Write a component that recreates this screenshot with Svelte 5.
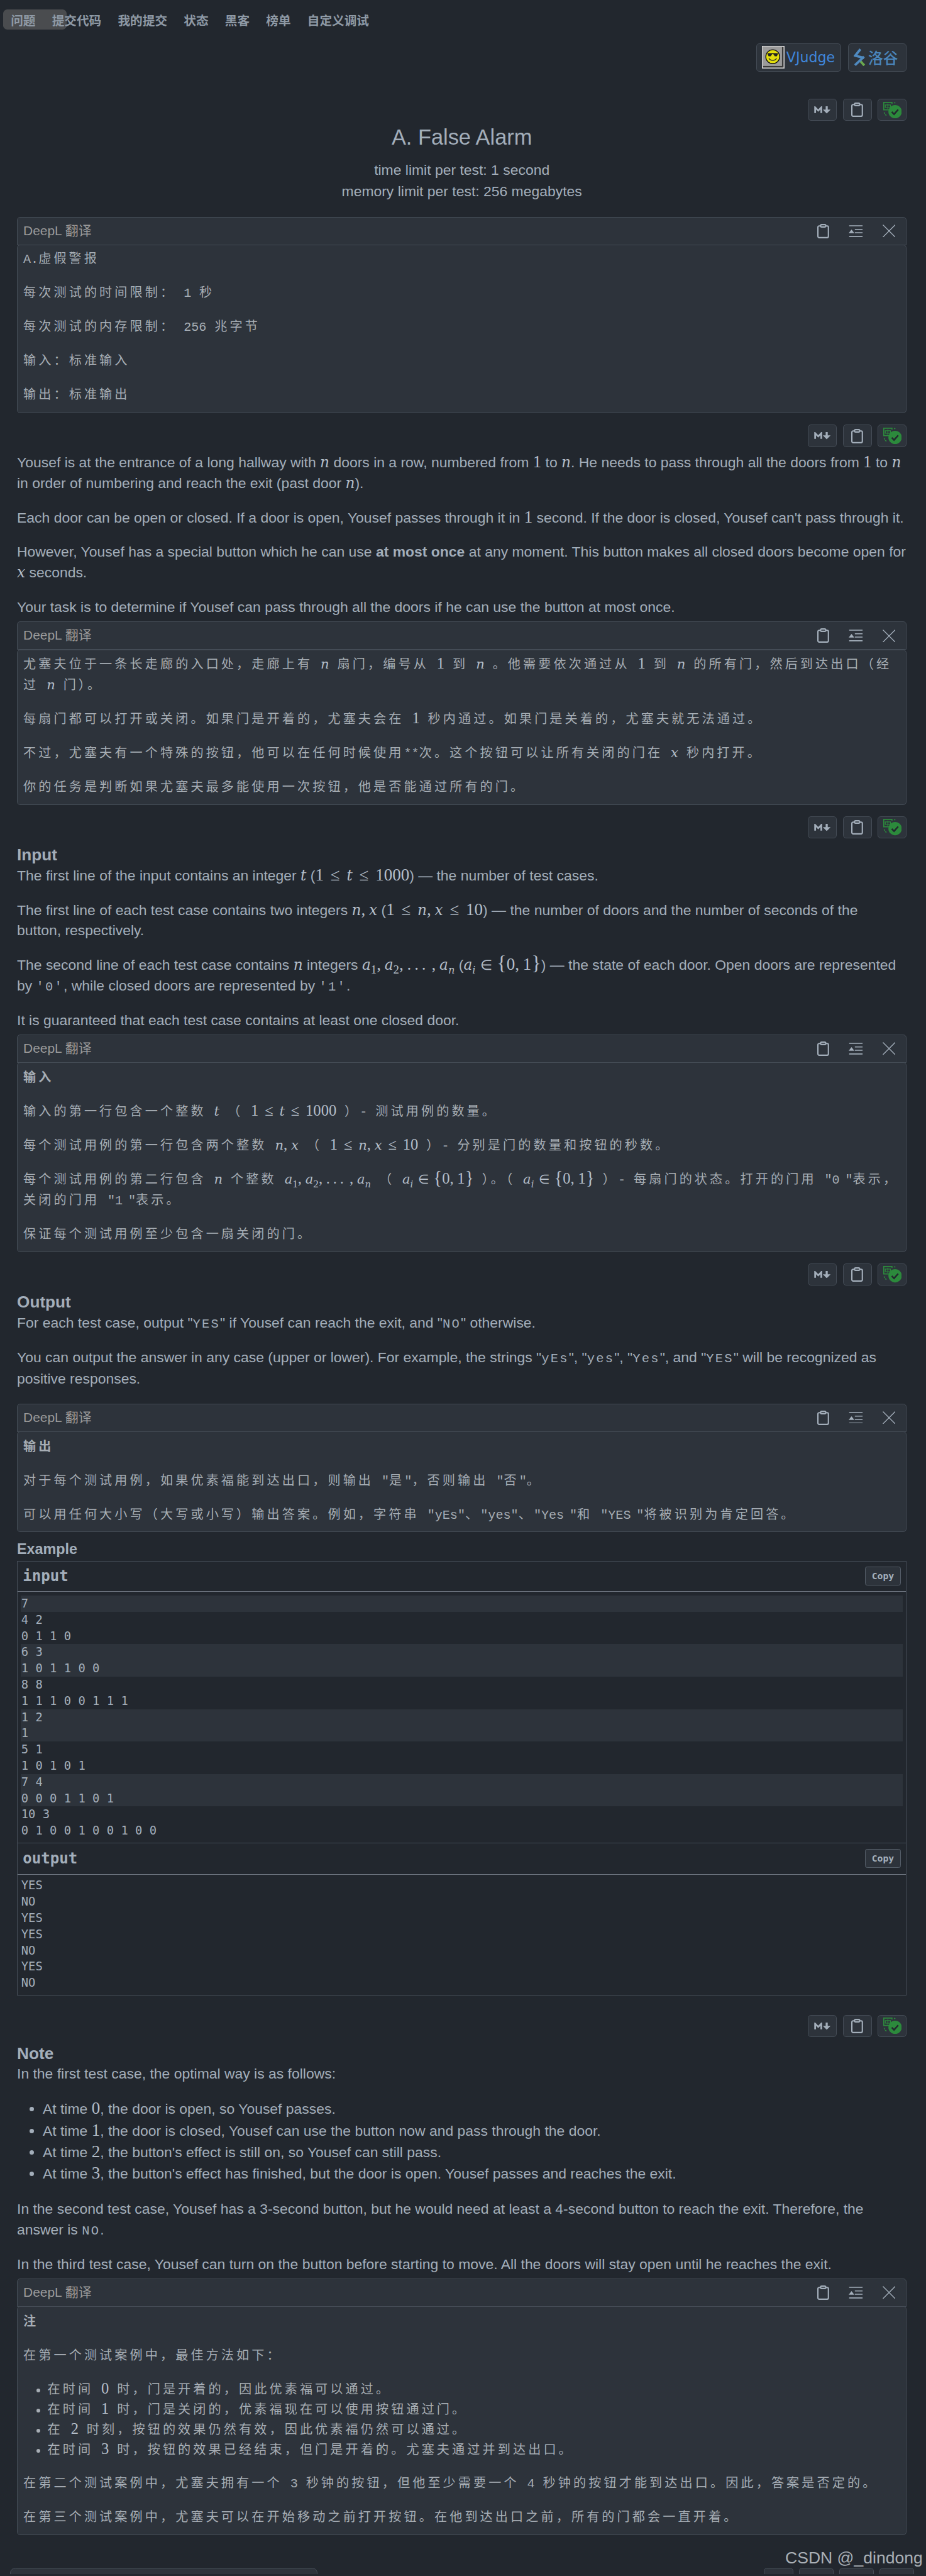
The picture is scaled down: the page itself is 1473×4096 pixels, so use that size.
<script>
  const tabs = ['问题', '提交代码', '我的提交', '状态', '黑客', '榜单', '自定义调试'];

  const inputRows = ['7', '4 2', '0 1 1 0', '6 3', '1 0 1 1 0 0', '8 8', '1 1 1 0 0 1 1 1', '1 2', '1', '5 1', '1 0 1 0 1', '7 4', '0 0 0 1 1 0 1', '10 3', '0 1 0 0 1 0 0 1 0 0'];
  const outputRows = ['YES', 'NO', 'YES', 'YES', 'NO', 'YES', 'NO'];

  // stripes follow the test cases: first line, then every other pair
  const striped = (i) => i === 0 || (i > 2 && (i - 3) % 4 < 2);

  // tiny math tokenizer: letters italic, digits upright, _x subscript
  const toks = (s) => s.match(/_.|[a-z]|\d+|./g).map((t) => {
    if (t[0] === '_') return { k: 'sub', t: t[1], it: /[a-z]/.test(t[1]) };
    if (/[a-z]/.test(t)) return { k: 'i', t };
    if (t === '≤') return { k: 'r', t };
    if (t === '∈') return { k: 'in', t };
    if (t === ',') return { k: 'c', t };
    if (t === '…') return { k: 'e', t: '...' };
    if (t === '{' || t === '}') return { k: 'b', t };
    return { k: 'd', t };
  });
</script>

{#snippet m(s)}<span class="m">{#each toks(s) as x}{#if x.k === 'i'}<i>{x.t}</i>{:else if x.k === 'sub'}<sub class:it={x.it}>{x.t}</sub>{:else}<span class={x.k}>{x.t}</span>{/if}{/each}</span>{/snippet}

{#snippet clip(w, h)}
  <svg width={w} height={h} viewBox="0 0 23 28" fill="none" stroke="#a3aeba" stroke-width="2.6">
    <rect x="1.3" y="4" width="20.4" height="22.7" rx="2.5" />
    <rect x="6.5" y="1.3" width="10" height="4.6" rx="2" fill="#2d333b" />
  </svg>
{/snippet}

{#snippet toolbar()}
  <div class="toolbar">
    <div class="tbtn">
      <svg width="32" height="14" viewBox="0 0 32 14">
        <path d="M2 13V2.2L8 8.4l6-6.2V13" fill="none" stroke="#a3aeba" stroke-width="3.4" />
        <path d="M22.5 0h4v6.5H32L24.5 14 17 6.5h5.5z" fill="#a3aeba" />
      </svg>
    </div>
    <div class="tbtn">{@render clip(23, 28)}</div>
    <div class="tbtn">
      <svg width="36" height="32" viewBox="0 0 36 32" fill="none" stroke="#2c8a3c" stroke-width="1.5">
        <path d="M12 15.5H1V1h16v3" stroke-width="2" />
        <path d="M4 6h10v5H4zM9 3.5v10" />
        <path d="M2 20c0 4 3 6 6 7M21 1l3 2" stroke-dasharray="3 2" stroke-width="2" />
        <circle cx="23" cy="19" r="13" fill="#2c8a3c" stroke="none" />
        <path d="M16.5 19.5l4.5 4.5 8-9" stroke="#22272e" stroke-width="3" />
      </svg>
    </div>
  </div>
{/snippet}

{#snippet boxHead()}
  <div class="box-head">
    <span class="box-label">DeepL 翻译</span>
    <div class="box-icons">
      {@render clip(23, 28)}
      <svg width="27" height="23" viewBox="0 0 27 23" fill="none" stroke="#a3aeba" stroke-width="2">
        <path d="M1 1.2h26M12 8.3h15M12 14.6h15M1 21.8h26" />
        <path d="M0 15.5L5.5 8.5l5.5 7z" fill="#a3aeba" stroke="none" />
      </svg>
      <svg width="25" height="25" viewBox="0 0 25 25" stroke="#a3aeba" stroke-width="1.6">
        <path d="M.6.6l23.8 23.8M24.4.6L.6 24.4" />
      </svg>
    </div>
  </div>
{/snippet}

<div class="page">
  <nav class="nav">
    <span class="pill"></span>
    {#each tabs as t}<span class="tab">{t}</span>{/each}
  </nav>

  <main class="main">
    <div class="links">
      <div class="link">
        <svg width="44" height="44" viewBox="0 0 44 44">
          <rect width="44" height="44" fill="#d4d4d4" />
          <rect x="2" y="2" width="40" height="40" fill="#3a3a3a" />
          <rect x="2" y="2" width="37" height="37" fill="#9b9b9b" />
          <circle cx="21" cy="21" r="13.5" fill="#e3df0c" stroke="#111" stroke-width="1.6" />
          <path d="M11 14h20v2l-2 4h-4l-3-4h-2l-3 4h-4l-2-4z" fill="#222" />
          <path d="M13.5 24c3 5.500 12 5.500 15 0" fill="none" stroke="#333" stroke-width="1.6" />
        </svg>
        <span class="vj">VJudge</span>
      </div>
      <div class="link luogu">
        <svg width="23" height="34" viewBox="0 0 23 34" fill="none" stroke-width="4.6">
          <path d="M11.500 23l9 10" stroke="#6aa84f" />
          <path d="M13 1.500L3 14l17 4.500" stroke="#4f8ac0" />
          <path d="M20 16L2.500 32.500" stroke="#4f8ac0" />
        </svg>
        <span class="lg">洛谷</span>
      </div>
    </div>

    {@render toolbar()}

    <h1>A. False Alarm</h1>
    <div class="limit">time limit per test: 1 second</div>
    <div class="limit">memory limit per test: 256 megabytes</div>

    <div class="box first">
      {@render boxHead()}
      <div class="box-body tr">
        <p><span class="l">A.</span>虚假警报</p>
        <p>每次测试的时间限制： <span class="l">1</span> 秒</p>
        <p>每次测试的内存限制： <span class="l">256</span> 兆字节</p>
        <p>输入：标准输入</p>
        <p>输出：标准输出</p>
      </div>
    </div>

    {@render toolbar()}

    <div class="text">
      <p>Yousef is at the entrance of a long hallway with {@render m('n')} doors in a row, numbered from {@render m('1')} to {@render m('n')}. He needs to pass through all the doors from {@render m('1')} to {@render m('n')} in order of numbering and reach the exit (past door {@render m('n')}).</p>
      <p>Each door can be open or closed. If a door is open, Yousef passes through it in {@render m('1')} second. If the door is closed, Yousef can't pass through it.</p>
      <p>However, Yousef has a special button which he can use <b>at most once</b> at any moment. This button makes all closed doors become open for {@render m('x')} seconds.</p>
      <p>Your task is to determine if Yousef can pass through all the doors if he can use the button at most once.</p>
    </div>

    <div class="box">
      {@render boxHead()}
      <div class="box-body tr">
        <p>尤塞夫位于一条长走廊的入口处，走廊上有 {@render m('n')} 扇门，编号从 {@render m('1')} 到 {@render m('n')} 。他需要依次通过从 {@render m('1')} 到 {@render m('n')} 的所有门，然后到达出口（经过 {@render m('n')} 门）。</p>
        <p>每扇门都可以打开或关闭。如果门是开着的，尤塞夫会在 {@render m('1')} 秒内通过。如果门是关着的，尤塞夫就无法通过。</p>
        <p>不过，尤塞夫有一个特殊的按钮，他可以在任何时候使用<span class="l">**</span>次。这个按钮可以让所有关闭的门在 {@render m('x')} 秒内打开。</p>
        <p>你的任务是判断如果尤塞夫最多能使用一次按钮，他是否能通过所有的门。</p>
      </div>
    </div>

    {@render toolbar()}

    <div class="text">
      <h3>Input</h3>
      <p>The first line of the input contains an integer {@render m('t')} ({@render m('1≤t≤1000')}) — the number of test cases.</p>
      <p>The first line of each test case contains two integers {@render m('n,x')} ({@render m('1≤n,x≤10')}) — the number of doors and the number of seconds of the<br />button, respectively.</p>
      <p>The second line of each test case contains {@render m('n')} integers {@render m('a_1,a_2,…,a_n')} ({@render m('a_i∈{0,1}')}) — the state of each door. Open doors are represented<br />by <code>'0'</code>, while closed doors are represented by <code>'1'</code>.</p>
      <p>It is guaranteed that each test case contains at least one closed door.</p>
    </div>

    <div class="box">
      {@render boxHead()}
      <div class="box-body tr">
        <p><b>输入</b></p>
        <p>输入的第一行包含一个整数 {@render m('t')} （ {@render m('1≤t≤1000')} ）<span class="l">-</span> 测试用例的数量。</p>
        <p>每个测试用例的第一行包含两个整数 {@render m('n,x')} （ {@render m('1≤n,x≤10')} ）<span class="l">-</span> 分别是门的数量和按钮的秒数。</p>
        <p>每个测试用例的第二行包含 {@render m('n')} 个整数 {@render m('a_1,a_2,…,a_n')} （ {@render m('a_i∈{0,1}')} ）。（ {@render m('a_i∈{0,1}')} ）<span class="l">-</span> 每扇门的状态。打开的门用 <span class="l">"0 "</span>表示，<br />关闭的门用 <span class="l">"1 "</span>表示。</p>
        <p>保证每个测试用例至少包含一扇关闭的门。</p>
      </div>
    </div>

    {@render toolbar()}

    <div class="text out">
      <h3>Output</h3>
      <p>For each test case, output "<code>YES</code>" if Yousef can reach the exit, and "<code>NO</code>" otherwise.</p>
      <p>You can output the answer in any case (upper or lower). For example, the strings "<code>yEs</code>", "<code>yes</code>", "<code>Yes</code>", and "<code>YES</code>" will be recognized as positive responses.</p>
    </div>

    <div class="box">
      {@render boxHead()}
      <div class="box-body tr">
        <p><b>输出</b></p>
        <p>对于每个测试用例，如果优素福能到达出口，则输出 <span class="l">"</span>是<span class="l">"</span>，否则输出 <span class="l">"</span>否<span class="l">"</span>。</p>
        <p>可以用任何大小写（大写或小写）输出答案。例如，字符串 <span class="l">"yEs"</span>、<span class="l">"yes"</span>、<span class="l">"Yes "</span>和 <span class="l">"YES "</span>将被识别为肯定回答。</p>
      </div>
    </div>

    <h4>Example</h4>
    <div class="sample">
      <div class="sample-title"><span>input</span><span class="copy">Copy</span></div>
      <div class="rows">
        {#each inputRows as r, i}<div class="row" class:stripe={striped(i)}>{r}</div>{/each}
      </div>
      <div class="sample-title second"><span>output</span><span class="copy">Copy</span></div>
      <div class="rows tight">
        {#each outputRows as r}<div class="row">{r}</div>{/each}
      </div>
    </div>

    {@render toolbar()}

    <div class="text">
      <h3>Note</h3>
      <p>In the first test case, the optimal way is as follows:</p>
      <ul>
        <li>At time {@render m('0')}, the door is open, so Yousef passes.</li>
        <li>At time {@render m('1')}, the door is closed, Yousef can use the button now and pass through the door.</li>
        <li>At time {@render m('2')}, the button's effect is still on, so Yousef can still pass.</li>
        <li>At time {@render m('3')}, the button's effect has finished, but the door is open. Yousef passes and reaches the exit.</li>
      </ul>
      <p>In the second test case, Yousef has a 3-second button, but he would need at least a 4-second button to reach the exit. Therefore, the answer is <code>NO</code>.</p>
      <p>In the third test case, Yousef can turn on the button before starting to move. All the doors will stay open until he reaches the exit.</p>
    </div>

    <div class="box">
      {@render boxHead()}
      <div class="box-body tr">
        <p><b>注</b></p>
        <p>在第一个测试案例中，最佳方法如下：</p>
        <ul>
          <li>在时间 {@render m('0')} 时，门是开着的，因此优素福可以通过。</li>
          <li>在时间 {@render m('1')} 时，门是关闭的，优素福现在可以使用按钮通过门。</li>
          <li>在 {@render m('2')} 时刻，按钮的效果仍然有效，因此优素福仍然可以通过。</li>
          <li>在时间 {@render m('3')} 时，按钮的效果已经结束，但门是开着的。尤塞夫通过并到达出口。</li>
        </ul>
        <p>在第二个测试案例中，尤塞夫拥有一个 <span class="l">3</span> 秒钟的按钮，但他至少需要一个 <span class="l">4</span> 秒钟的按钮才能到达出口。因此，答案是否定的。</p>
        <p>在第三个测试案例中，尤塞夫可以在开始移动之前打开按钮。在他到达出口之前，所有的门都会一直开着。</p>
      </div>
    </div>
  </main>

  <div class="bottom">
    <div class="panel"></div>
    <div class="bottom-btns">
      <span class="bb w57"></span><span class="bb"></span><span class="bb"></span><span class="bb"></span>
    </div>
  </div>

  <span class="mark">CSDN @_dindong</span>
</div>

<style>
  :global(body) {
    background: #22272e;
  }

  .page {
    zoom: 0.819;
    position: relative;
    width: 1797px;
    height: 4997px;
    overflow: hidden;
    background: #22272e;
    color: #a3aeba;
    font-family: "Liberation Sans", "Noto Sans CJK SC", sans-serif;
    font-size: 28px;
    line-height: 40px;
  }

  .nav {
    position: relative;
    display: flex;
    align-items: center;
    gap: 32px;
    height: 78px;
    padding-left: 21px;
    font-family: "Noto Sans CJK SC", sans-serif;
    font-size: 24px;
    font-weight: 700;
    color: #8e99a5;
  }

  .pill {
    position: absolute;
    left: 6px;
    top: 18px;
    width: 124px;
    height: 40px;
    border-radius: 8px;
    background: #4a4c4f;
  }

  .tab {
    position: relative;
  }

  .main {
    padding: 0 36px 0 33px;
  }

  .links {
    display: flex;
    justify-content: flex-end;
    gap: 13px;
    margin-top: 6px;
  }

  .link {
    display: flex;
    align-items: center;
    gap: 3px;
    width: 165px;
    height: 55px;
    box-sizing: border-box;
    padding-left: 10px;
    border: 2px solid #444c56;
    border-radius: 6px;
    background: #2d333b;
  }

  .luogu {
    width: 114px;
    gap: 5px;
  }

  .vj {
    font-family: "DejaVu Sans", sans-serif;
    font-size: 27px;
    color: #3f86dc;
  }

  .lg {
    font-family: "Noto Sans CJK SC", sans-serif;
    font-size: 29px;
    font-weight: 500;
    color: #4a86bd;
  }

  .toolbar {
    display: flex;
    justify-content: flex-end;
    gap: 12px;
    margin-top: 22px;
  }

  .links + .toolbar {
    margin-top: 53px;
  }

  .sample + .toolbar {
    margin-top: 38px;
  }

  .tbtn {
    display: flex;
    align-items: center;
    justify-content: center;
    width: 56px;
    height: 43px;
    box-sizing: border-box;
    border: 2px solid #444c56;
    border-radius: 6px;
    background: #2d333b;
  }

  h1 {
    margin: 4px 0 14px;
    font-size: 42px;
    font-weight: 400;
    line-height: 56px;
    text-align: center;
  }

  .limit {
    line-height: 42px;
    text-align: center;
  }

  .box {
    margin-top: 8px;
  }

  .box.first {
    margin-top: 28px;
  }

  .box.first .box-body {
    padding-top: 9px;
    padding-bottom: 12.5px;
  }

  .box-head {
    display: flex;
    align-items: center;
    justify-content: space-between;
    height: 55px;
    box-sizing: border-box;
    padding: 0 21px 0 11px;
    border: 2px solid #444c56;
    border-radius: 6px 6px 0 0;
    background: #2d333b;
  }

  .box-label {
    font-size: 25.6px;
    color: #9a9a9a;
  }

  .box-icons {
    display: flex;
    align-items: center;
    gap: 38px;
  }

  /* 2px borders snap to one device pixel here, padding makes up the height */
  .box-body {
    margin-top: -1px;
    padding: 10.8px 11px;
    border: 2px solid #444c56;
    border-radius: 6px;
    background: #2d333b;
  }

  .tr {
    font-family: "Liberation Mono", "Noto Sans CJK SC", monospace;
    font-size: 24.6px;
    line-height: 40px;
    letter-spacing: 5px;
    word-spacing: -4px;
    color: #a6adb4;
  }

  .tr p {
    margin: 0 0 26px;
  }

  .tr p:last-child {
    margin-bottom: 0;
  }

  .tr ul {
    margin: 0 0 26px;
    padding-left: 47px;
    line-height: 39px;
  }

  .l {
    letter-spacing: 0;
  }

  .text {
    margin-top: 10px;
  }

  .text p {
    margin: 0 0 27px;
  }

  .text p:last-child {
    margin-bottom: 0;
  }

  .text.out p:last-child {
    margin-bottom: 27px;
    line-height: 41px;
  }

  .text.out p:first-of-type {
    margin-bottom: 28px;
  }

  .text ul {
    margin: 0 0 27px;
    padding-left: 50px;
    line-height: 42px;
  }

  h3 {
    margin: 0;
    padding-top: 2px;
    font-size: 32px;
    font-weight: 700;
    line-height: 40px;
  }

  h4 {
    margin: 13px 0 2.8px;
    font-size: 28.5px;
    font-weight: 700;
    line-height: 40px;
  }

  code {
    font-family: "Liberation Mono", monospace;
    font-size: 25px;
    line-height: 0;
    letter-spacing: 2.7px;
  }

  .m {
    font-family: "Liberation Serif", serif;
    font-size: 33px;
    line-height: 0;
    letter-spacing: 0;
    color: #b4bec9;
  }

  .tr .m {
    font-size: 30px;
  }

  .m i {
    font-family: "DejaVu Serif", serif;
    font-size: 0.86em;
    font-style: italic;
  }

  .m sub {
    font-size: 0.7em;
    line-height: 0;
  }

  .m sub.it {
    font-family: "DejaVu Serif", serif;
    font-size: 0.6em;
    font-style: italic;
  }

  .r {
    margin: 0 0.4em;
  }

  .in {
    margin: 0 9px;
    font-size: 0.8em;
  }

  .c {
    margin-right: 7px;
  }

  .e {
    margin-right: 5px;
    letter-spacing: 6px;
  }

  .b {
    font-size: 1.2em;
  }

  .sample {
    border: 2px solid #444c56;
    font-family: "DejaVu Sans Mono", monospace;
  }

  .sample-title {
    display: flex;
    align-items: center;
    justify-content: space-between;
    height: 58px;
    box-sizing: border-box;
    padding: 0 10px 0 10px;
    border-bottom: 2px solid #6e7681;
    font-size: 29.4px;
    font-weight: 700;
  }

  .sample-title.second {
    height: 62px;
    border-top: 2px solid #444c56;
  }

  .copy {
    width: 70px;
    height: 37px;
    box-sizing: border-box;
    border: 1px solid #545d68;
    border-radius: 4px;
    background: #2d333b;
    font-size: 18px;
    line-height: 35px;
    text-align: center;
  }

  .rows {
    padding: 8px 6px 7px;
    font-size: 23px;
    line-height: 31.5px;
  }

  .rows.tight {
    padding: 6px 6px 6.8px;
  }

  .row {
    height: 31.5px;
    padding-left: 1px;
  }

  .stripe {
    background: #2d333b;
  }

  .bottom {
    display: flex;
    justify-content: space-between;
    align-items: flex-start;
    margin-top: 64px;
    padding: 0 22px 0 20px;
  }

  .panel {
    width: 597px;
    height: 60px;
    box-sizing: border-box;
    border: 2px solid #444c56;
    border-radius: 10px 10px 0 0;
    background: #2d333b;
  }

  .bottom-btns {
    display: flex;
    gap: 11px;
  }

  .bb {
    width: 67px;
    height: 40px;
    box-sizing: border-box;
    border: 2px solid #444c56;
    border-radius: 6px;
    background: #2d333b;
  }

  .w57 {
    width: 57px;
  }

  .mark {
    position: absolute;
    right: 5px;
    top: 4945px;
    font-size: 32.4px;
    line-height: 42px;
    color: #aab0b6;
  }
</style>
